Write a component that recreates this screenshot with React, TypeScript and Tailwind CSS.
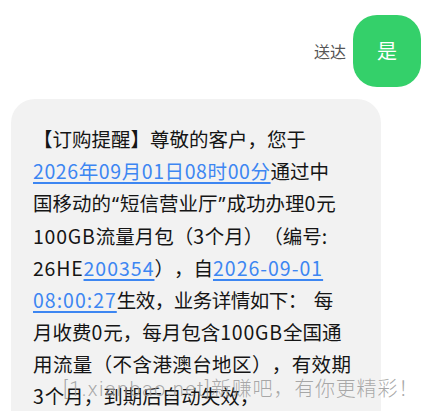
import React from 'react';

const Link: React.FC<{ children: React.ReactNode; t?: string }> = ({ children, t = 'tracking-[1px]' }) => (
  <span className={`text-[#3d86f2] underline decoration-[1.5px] underline-offset-[3px] ${t}`}>
    {children}
  </span>
);

const Num: React.FC<{ children: React.ReactNode }> = ({ children }) => (
  <span className="tracking-[0.8px]">{children}</span>
);

const Q: React.FC<{ children: React.ReactNode }> = ({ children }) => (
  <span className="px-[1px] font-['Noto_Sans',sans-serif]">{children}</span>
);

const App: React.FC = () => {
  return (
    <div className="relative h-[411px] w-[431px] overflow-hidden bg-white font-['Noto_Sans_CJK_SC','Noto_Sans',sans-serif] [text-spacing-trim:space-all]">
      {/* 已发送 */}
      <div className="flex items-center justify-end gap-[7px] pt-[15px] pr-[10px]">
        <span className="text-[16px] text-[#555]">送达</span>
        <div className="flex h-[72px] w-[68px] items-center justify-center rounded-[24px] bg-[#34d06a] text-[20px] text-white">
          是
        </div>
      </div>

      {/* 收到的短信 */}
      <div className="ml-[11px] mt-[12px] w-[370px] rounded-[24px] bg-[#f2f2f2] pl-[22px] pr-[10px] pt-[24px] pb-[30px] text-[19.5px] leading-[32px] text-[#151515]">
        <div>【订购提醒】尊敬的客户，您于</div>
        <div>
          <Link t="tracking-[0.6px]">2026年09月01日08时00分</Link>通过中
        </div>
        <div>
          国移动的<Q>“</Q>短信营业厅<Q>”</Q>成功办理<Num>0</Num>元
        </div>
        <div>
          <Num>100GB</Num>流量月包（<Num>3</Num>个月）（编号:
        </div>
        <div>
          <Num>26HE</Num>
          <Link>200354</Link>），自<Link>2026-09-01</Link>
        </div>
        <div>
          <Link>08:00:27</Link>
          <span className="tracking-[-0.5px]">生效，业务详情如下</span>
          <span className="inline-block w-[26px]">：</span>每
        </div>
        <div>
          月收费<Num>0</Num>元，每月包含<Num>100GB</Num>全国通
        </div>
        <div className="tracking-[0.4px]">用流量（不含港澳台地区），有效期</div>
        <div>
          <Num>3</Num>个月，到期后自动失效，
        </div>
      </div>

      {/* 水印 */}
      <div className="pointer-events-none absolute left-[63px] top-[375px] whitespace-nowrap text-[20px] leading-[26px] font-light tracking-[0.8px] text-[#9a9a9a]/85">
        <span className="font-['Roboto',sans-serif] tracking-[1.4px]">[1.xianbao.net]</span>
        新赚吧，有你更精彩！
      </div>
    </div>
  );
};

export default App;
